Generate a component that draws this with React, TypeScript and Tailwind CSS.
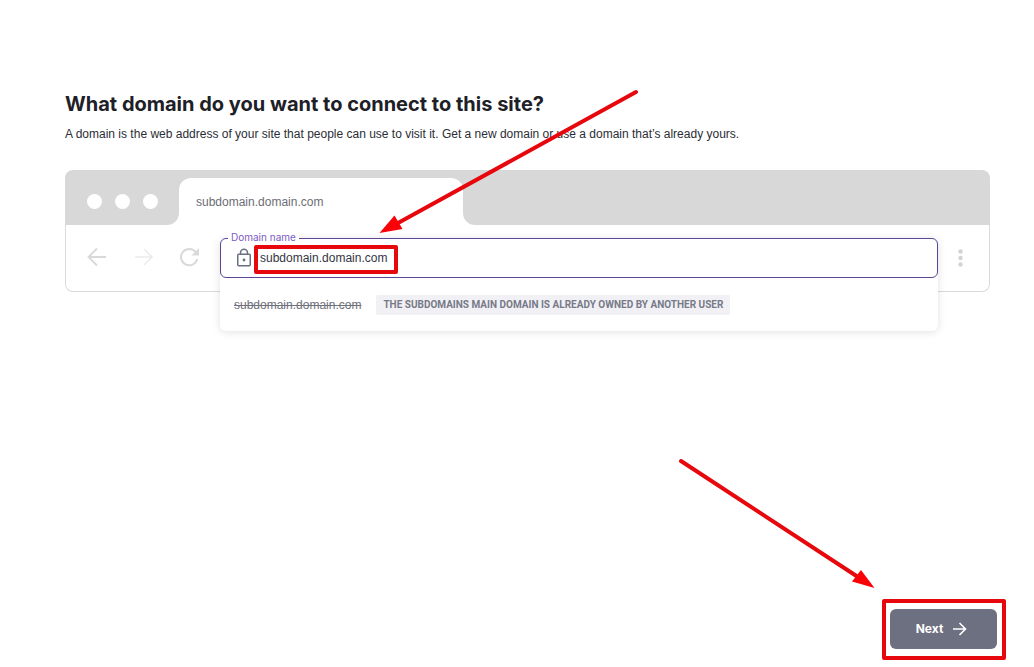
import { useState } from 'react';

function BrowserTab({ title }: { title: string }) {
  return (
    <div className="flex h-[55px] rounded-t-lg bg-white">
      <div className="flex w-[114px] shrink-0 items-center gap-[13px] rounded-tl-lg rounded-br-xl bg-[#d8d8d8] pt-2 pl-[22px]">
        <span className="size-[15px] rounded-full bg-white" />
        <span className="size-[15px] rounded-full bg-white" />
        <span className="size-[15px] rounded-full bg-white" />
      </div>
      <div className="w-[284px] shrink-0 bg-[#d8d8d8] pt-2">
        <div className="flex h-full items-center rounded-t-xl bg-white px-[17px] text-xs text-[#6b6d75]">
          {title}
        </div>
      </div>
      <div className="flex-1 rounded-tr-lg rounded-bl-xl bg-[#d8d8d8]" />
    </div>
  );
}

function NavIcons() {
  return (
    <div className="flex shrink-0 items-center gap-[22px] pl-[19px]">
      <button type="button" aria-label="Back" className="text-[#d9d9d9]">
        <svg className="size-6" viewBox="0 0 24 24" fill="none" stroke="currentColor" strokeWidth="1.8">
          <path d="M21 11H4M12 2.5 3.5 11l8.500 8.500" />
        </svg>
      </button>
      <button type="button" aria-label="Forward" className="text-[#ececec]">
        <svg className="size-6" viewBox="0 0 24 24" fill="none" stroke="currentColor" strokeWidth="1.600">
          <path d="M4 11h17M13 3l8 8-8 8" />
        </svg>
      </button>
      <button type="button" aria-label="Reload" className="text-[#d9d9d9]">
        <svg className="size-6" viewBox="0 0 24 24" fill="none">
          <path d="M18.800 6.200A8.200 8.200 0 1 0 20.200 13" stroke="currentColor" strokeWidth="2" />
          <path d="M22 2v7.500h-7.500z" fill="currentColor" />
        </svg>
      </button>
    </div>
  );
}

function LockIcon() {
  return (
    <svg className="h-5 w-4 shrink-0 text-[#6b6f80]" viewBox="0 0 16 20" fill="none" stroke="currentColor" strokeWidth="1.500">
      <rect x="1.750" y="6.250" width="12.500" height="11.500" rx="1" />
      <path d="M4.500 6V4.800a3.500 3.500 0 0 1 7 0V6" />
      <circle cx="8" cy="12" r="1.400" fill="currentColor" stroke="none" />
    </svg>
  );
}

function DomainField({ value, onChange }: { value: string; onChange: (v: string) => void }) {
  return (
    <div className="relative ml-[19px] h-10 flex-1">
      <div className="absolute inset-x-0 top-0 rounded-md bg-white shadow-[0_1px_8px_rgba(0,0,0,0.12)]">
        <div className="relative flex h-10 items-center rounded-md border border-[#5d4497] pr-4 pl-[15px]">
          <label htmlFor="domain" className="absolute -top-2.5 left-[7px] bg-white px-[3px] font-['Inter',sans-serif] text-[10px] leading-4 text-[#7a5bc4]">
            Domain name
          </label>
          <LockIcon />
          <input
            id="domain"
            type="text"
            value={value}
            onChange={(e) => onChange(e.target.value)}
            className="ml-2 min-w-0 flex-1 bg-transparent text-xs text-[#33353f] outline-none"
          />
          <span className="pointer-events-none absolute top-1.5 left-[33px] h-[29px] w-36 rounded-xs border-4 border-[#e6080d]" />
        </div>
        <div className="flex h-[53px] items-center gap-[15px] px-3.5">
          <span className="text-xs text-[#6f717c] line-through">subdomain.domain.com</span>
          <span className="rounded-xs bg-[#f1f1f5] px-[7px] font-['Roboto',sans-serif] text-[10px] leading-5 font-bold text-[#777a88]">
            THE SUBDOMAINS MAIN DOMAIN IS ALREADY OWNED BY ANOTHER USER
          </span>
        </div>
      </div>
    </div>
  );
}

function Arrows() {
  return (
    <svg className="pointer-events-none absolute top-0 left-0" width="1034" height="667" viewBox="0 0 1034 667" aria-hidden="true">
      <g stroke="#e6080d" strokeWidth="4" strokeLinecap="round">
        <path d="M636 92 398 223" />
        <path d="M681 461 858 577" />
      </g>
      <path d="M379.500 233 394.500 215.500 402.500 229z" fill="#fb0007" />
      <path d="M874.500 588 861 570 852 581.500z" fill="#fb0007" />
    </svg>
  );
}

export default function App() {
  const [domain, setDomain] = useState('subdomain.domain.com');

  return (
    <div className="relative flex min-h-screen flex-col bg-white font-['Liberation_Sans',sans-serif]">
      <main className="pt-[90px] pr-11 pl-[65px]">
        <h1 className="font-['Inter',sans-serif] text-xl leading-7 font-bold text-[#1d2027]">
          What domain do you want to connect to this site?
        </h1>
        <p className="mt-2 text-xs leading-4 text-[#2b2d35]">
          A domain is the web address of your site that people can use to visit it. Get a new domain or use a domain that’s already yours.
        </p>

        <div className="mt-7">
          <BrowserTab title={domain} />
          <div className="flex h-[67px] items-center rounded-b-lg border border-t-0 border-[#dadada]">
            <NavIcons />
            <DomainField value={domain} onChange={setDomain} />
            <button type="button" aria-label="More" className="mr-[17px] ml-2.5 text-[#d3d3d3]">
              <svg className="size-6" viewBox="0 0 24 24" fill="currentColor">
                <circle cx="12.500" cy="5.500" r="2.200" />
                <circle cx="12.500" cy="12" r="2.200" />
                <circle cx="12.500" cy="18.500" r="2.200" />
              </svg>
            </button>
          </div>
        </div>
      </main>

      <footer className="mt-auto flex justify-end pr-7 pb-[7px]">
        <div className="rounded-xs border-4 border-[#e6080d] pt-1.5 pr-[5px] pb-[7px] pl-1">
          <button
            type="button"
            className="flex h-10 w-[107px] items-center justify-center gap-2 rounded-md bg-[#6d7080] pr-1 font-['Inter',sans-serif] text-xs font-bold text-white"
          >
            Next
            <svg className="size-4" viewBox="0 0 16 16" fill="none" stroke="currentColor" strokeWidth="1.600">
              <path d="M2 8h12.500M8.500 2l6 6-6 6" />
            </svg>
          </button>
        </div>
      </footer>

      <Arrows />
    </div>
  );
}
